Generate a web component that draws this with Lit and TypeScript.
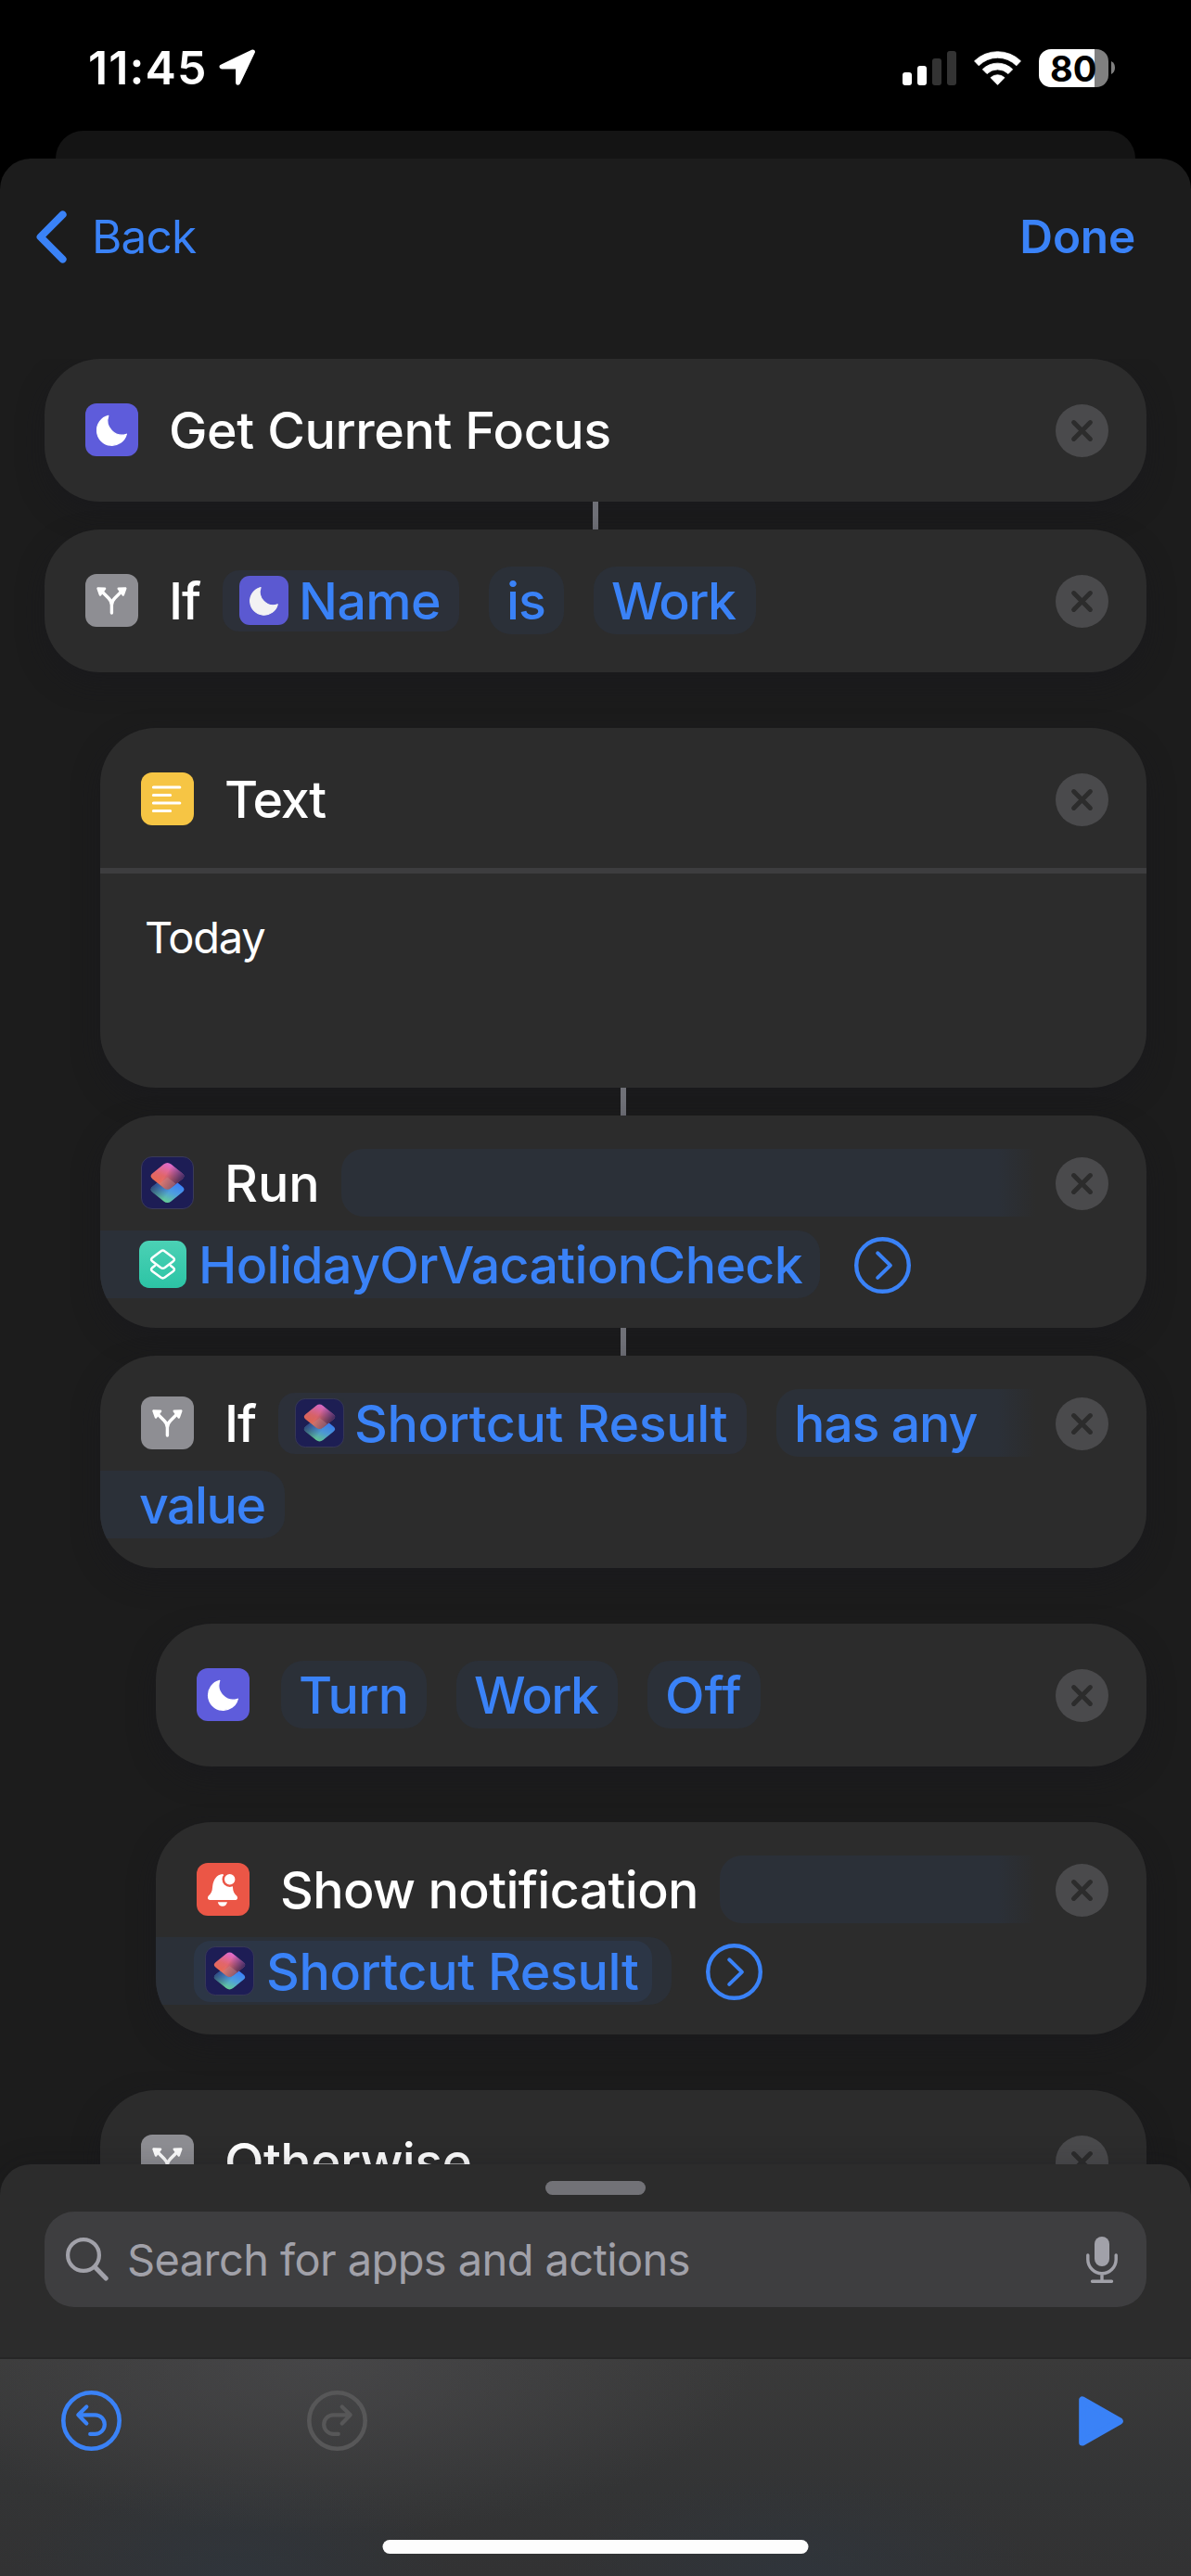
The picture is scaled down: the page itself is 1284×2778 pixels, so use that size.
import { LitElement, html, css, svg, nothing, type TemplateResult } from "lit";
import { customElement, property } from "lit/decorators.js";
import { classMap } from "lit/directives/class-map.js";
import { styleMap } from "lit/directives/style-map.js";

type IconName = "moon" | "branch" | "text" | "shortcuts" | "shortcut-green" | "bell";

interface Token {
  kind: "label" | "pill" | "variable" | "nested" | "field" | "more";
  text?: string;
  icon?: IconName;
  /** box width in px */
  w?: number;
  /** letter spacing in px */
  ls?: number;
  /** the token is the second half of one that wraps from the line above */
  wrapped?: boolean;
  /** the token continues on the next line and fades out at its end */
  fade?: boolean;
}

interface Action {
  icon: IconName;
  lines: Token[][];
  indent: number;
  body?: string;
  connected?: boolean;
}

const actions: Action[] = [
  {
    icon: "moon",
    indent: 0,
    connected: true,
    lines: [[{ kind: "label", text: "Get Current Focus", ls: -0.4 }]],
  },
  {
    icon: "branch",
    indent: 0,
    lines: [
      [
        { kind: "label", text: "If", w: 58, ls: -1 },
        { kind: "variable", text: "Name", icon: "moon", w: 255, ls: -0.6 },
        { kind: "pill", text: "is", w: 81, ls: -1 },
        { kind: "pill", text: "Work", w: 175, ls: -1.6 },
      ],
    ],
  },
  {
    icon: "text",
    indent: 1,
    connected: true,
    body: "Today",
    lines: [[{ kind: "label", text: "Text", ls: -1.3 }]],
  },
  {
    icon: "shortcuts",
    indent: 1,
    connected: true,
    lines: [
      [
        { kind: "label", text: "Run", w: 126 },
        { kind: "field", w: 750, fade: true },
      ],
      [
        { kind: "pill", text: "HolidayOrVacationCheck", icon: "shortcut-green", w: 776, ls: -0.64, wrapped: true },
        { kind: "more" },
      ],
    ],
  },
  {
    icon: "branch",
    indent: 1,
    lines: [
      [
        { kind: "label", text: "If", w: 58, ls: -1 },
        { kind: "variable", text: "Shortcut Result", icon: "shortcuts", w: 505, ls: -0.34 },
        { kind: "pill", text: "has any", w: 281, ls: -1.2, fade: true },
      ],
      [{ kind: "pill", text: "value", w: 199, ls: -1.5, wrapped: true }],
    ],
  },
  {
    icon: "moon",
    indent: 2,
    lines: [
      [
        { kind: "pill", text: "Turn", w: 157, ls: -0.66 },
        { kind: "pill", text: "Work", w: 174, ls: -1.6 },
        { kind: "pill", text: "Off", w: 122 },
      ],
    ],
  },
  {
    icon: "bell",
    indent: 2,
    lines: [
      [
        { kind: "label", text: "Show notification", w: 474, ls: -0.63 },
        { kind: "field", w: 342, fade: true },
      ],
      [
        { kind: "nested", text: "Shortcut Result", icon: "shortcuts", w: 494, ls: -0.4, wrapped: true },
        { kind: "more" },
      ],
    ],
  },
  {
    icon: "branch",
    indent: 1,
    lines: [[{ kind: "label", text: "Otherwise", ls: -0.6 }]],
  },
];

const rhombus =
  "M24.5 8.5Q28.5 5.5 32.5 8.5L44.5 18.2Q48.5 21.3 44.5 24.4L32.5 34Q28.5 37 24.5 34L12.5 24.4Q8.5 21.3 12.5 18.2Z";

const glyphs: Record<IconName, TemplateResult> = {
  moon: svg`
    <rect width="57" height="57" rx="12" fill="#5e5cdb"/>
    <path d="M24.8 13.4A16.2 16.2 0 1 0 44.4 33.2A15.5 15.5 0 0 1 24.8 13.4Z" fill="#fff" stroke="#fff" stroke-width="1.2" stroke-linejoin="round"/>`,
  branch: svg`
    <rect width="57" height="57" rx="12" fill="#8e8e93"/>
    <path d="M28.4 42V33.5Q28.4 29.5 25 26L18 19M28.4 33.5Q28.4 29.5 31.8 26L38.8 19" fill="none" stroke="#fff" stroke-width="3.4" stroke-linecap="round"/>
    <path d="M13.6 15.6L21 15.8L16 22.4ZM43.2 15.6L35.8 15.8L40.8 22.4Z" fill="#fff" stroke="#fff" stroke-width="2.6" stroke-linejoin="round"/>`,
  text: svg`
    <rect width="57" height="57" rx="12" fill="#f6c544"/>
    <path d="M13.4 16H41.8M13.4 24.5H31.6M13.4 33H41.8M13.4 41.5H31.6" stroke="#fff" stroke-width="3.1" stroke-linecap="round"/>`,
  shortcuts: svg`
    <defs>
      <linearGradient id="warm" x1="0.15" y1="0.75" x2="0.55" y2="0">
        <stop offset="0" stop-color="#f26d50"/><stop offset="0.4" stop-color="#ec6a6c"/><stop offset="1" stop-color="#ea6fd9"/>
      </linearGradient>
      <linearGradient id="warm-shade" x1="0.5" y1="0.35" x2="1" y2="0.6">
        <stop offset="0" stop-color="#1d1d55" stop-opacity="0"/><stop offset="1" stop-color="#1d1d55" stop-opacity="0.85"/>
      </linearGradient>
      <linearGradient id="cool" x1="0.8" y1="0.25" x2="0.4" y2="1">
        <stop offset="0" stop-color="#3a7ffb"/><stop offset="0.5" stop-color="#4f9fdc"/><stop offset="1" stop-color="#66d08f"/>
      </linearGradient>
      <linearGradient id="cool-shade" x1="0.55" y1="0.6" x2="0.05" y2="0.3">
        <stop offset="0" stop-color="#1d1d55" stop-opacity="0"/><stop offset="1" stop-color="#1d1d55" stop-opacity="0.7"/>
      </linearGradient>
    </defs>
    <rect x="0.5" y="0.5" width="56" height="56" rx="11.5" fill="#1d1d55" stroke="#3b3b58"/>
    <g transform="translate(0 14.4)"><path d=${rhombus} fill="url(#cool)"/><path d=${rhombus} fill="url(#cool-shade)"/></g>
    <path d=${rhombus} fill="url(#warm)" opacity="0.95"/><path d=${rhombus} fill="url(#warm-shade)"/>
    <path d="M28.5 22.6L37.5 29.6L32.5 34Q28.5 37 24.5 34L19.5 29.6Z" fill="#c98a8e" opacity="0.4"/>`,
  "shortcut-green": svg`
    <defs><linearGradient id="green" x1="0" y1="0" x2="0" y2="1"><stop offset="0" stop-color="#4bd1b5"/><stop offset="1" stop-color="#2cc4a5"/></linearGradient></defs>
    <rect width="57" height="57" rx="12" fill="url(#green)"/>
    <g fill="none" stroke="#fff" stroke-width="2.8" stroke-linejoin="round" stroke-linecap="round">
      <path d="M26 12.8Q28.5 10.8 31 12.8L41 20.4Q43.8 22.6 41 24.8L31 32.4Q28.5 34.2 26 32.4L16 24.8Q13.2 22.6 16 20.4Z"/>
      <path d="M19.2 29.8L16 32.4Q13.2 34.6 16 36.8L26 44.2Q28.5 46 31 44.2L41 36.8Q43.8 34.6 41 32.4L37.8 29.8"/>
    </g>`,
  bell: svg`
    <rect width="57" height="57" rx="12" fill="#eb5646"/>
    <path d="M28 12C21 12.6 17.6 19 17 26.5C16.8 31 15.4 33 12.8 35.6C11.2 37.6 12 40 14.4 40H41.6C44 40 44.8 37.6 43.2 35.6C40.6 33 39.2 31 39 26.5L38.4 20Z" fill="#fff"/>
    <path d="M22.8 42.2H33Q31.8 46.8 27.9 46.8Q24 46.8 22.8 42.2Z" fill="#fff"/>
    <circle cx="35.7" cy="17.7" r="8.2" fill="#eb5646"/><circle cx="35.7" cy="17.7" r="5.7" fill="#fff"/>`,
};

@customElement("action-icon")
export class ActionIcon extends LitElement {
  @property() name: IconName = "moon";
  @property({ type: Number }) size = 57;
  static styles = css`
    :host { display: block; flex: none; }
    svg { display: block; }
  `;
  render() {
    return html`<svg width=${this.size} height=${this.size} viewBox="0 0 57 57">${glyphs[this.name]}</svg>`;
  }
}

@customElement("action-card")
export class ActionCard extends LitElement {
  @property({ attribute: false }) action!: Action;

  static styles = css`
    :host { display: block; }
    .card {
      overflow: hidden;
      border-radius: 60px;
      background: #2c2c2c;
      box-shadow: 0 12px 28px rgba(24, 24, 30, 0.5);
      color: #fff;
      font-size: 55.5px;
      font-weight: 500;
      line-height: 72px;
    }
    .lines { display: flex; flex-direction: column; gap: 15px; padding: 40px 0 41px; }
    .lines.two { padding: 36px 0 32px; }
    .lines.headed { padding-bottom: 38px; border-bottom: 6px solid #3d3d3f; }
    .line { display: flex; align-items: center; height: 73px; }
    .lead { padding-left: 44px; }
    .label { margin-left: 33px; }
    .lead + .pill { margin-left: 34px; }
    .word { padding-top: 1px; white-space: nowrap; }
    .box { display: flex; align-items: center; box-sizing: border-box; flex: none; color: #3a82f7; }
    .pill, .field { height: 73px; border-radius: 24px; background: #2b3038; padding-left: 19px; }
    .box + .box { margin-left: 32px; }
    .variable { height: 66px; border-radius: 18px; background: #2c3039; padding-left: 18px; gap: 11px; }
    .variable action-icon { opacity: 0.94; }
    .fade { border-radius: 24px 0 0 24px; background: linear-gradient(90deg, #2b3038 calc(100% - 42px), #2c2c2c calc(100% - 1px)); }
    .wrapped { border-radius: 0 24px 24px 0; padding-left: 42px; gap: 13px; }
    .outer { padding: 0 21px 0 41px; }
    .inner { height: 66px; border-radius: 18px; background: #2c3646; padding-left: 12px; gap: 13px; }
    .more { display: block; flex: none; margin: 2px 0 0 37px; }
    .remove { display: block; flex: none; margin: 2px 41px 0 auto; }
    .body { height: 191px; padding: 40px 48px 0; font-size: 47px; font-weight: 400; line-height: 58px; letter-spacing: -1.3px; }
  `;

  private token(t: Token) {
    const box = t.w ? { width: `${t.w}px` } : {};
    const word = html`<span class="word" style=${styleMap({ letterSpacing: `${t.ls ?? 0}px` })}>${t.text}</span>`;
    switch (t.kind) {
      case "label":
        return html`<div class="label" style=${styleMap(box)}>${word}</div>`;
      case "field":
        return html`<div class="box field fade" style=${styleMap(box)}></div>`;
      case "variable":
        return html`<div class="box variable" style=${styleMap(box)}><action-icon .name=${t.icon!} .size=${53}></action-icon>${word}</div>`;
      case "nested":
        return html`<div class="box pill wrapped outer">
          <div class="box inner" style=${styleMap(box)}><action-icon .name=${t.icon!} .size=${53}></action-icon>${word}</div>
        </div>`;
      case "more":
        return html`<svg class="more" width="61" height="61" viewBox="0 0 61 61" fill="none" stroke="#3a82f7" stroke-linecap="round" stroke-linejoin="round">
          <circle cx="30.5" cy="30.5" r="28.3" stroke-width="4.4"/><path d="M25.2 17.3L38.9 30.6L25.2 43.9" stroke-width="4"/></svg>`;
      default:
        return html`<div class=${classMap({ box: true, pill: true, fade: !!t.fade, wrapped: !!t.wrapped })} style=${styleMap(box)}>
          ${t.icon ? html`<action-icon .name=${t.icon} .size=${51}></action-icon>` : nothing}${word}
        </div>`;
    }
  }

  render() {
    const a = this.action;
    return html`<div class="card">
      <div class=${classMap({ lines: true, two: a.lines.length === 2, headed: !!a.body })}>
        ${a.lines.map(
          (line, i) => html`<div class="line">
            ${i === 0 ? html`<action-icon class="lead" .name=${a.icon}></action-icon>` : nothing}
            ${line.map((t) => this.token(t))}
            ${i === 0
              ? html`<svg class="remove" width="57" height="57" viewBox="0 0 57 57"><circle cx="28.5" cy="28.5" r="28.5" fill="#4a4a4c"/>
                  <path d="M19.6 19.6L37.4 37.4M37.4 19.6L19.6 37.4" stroke="#2c2c2c" stroke-width="5" stroke-linecap="round"/></svg>`
              : nothing}
          </div>`,
        )}
      </div>
      ${a.body ? html`<div class="body">${a.body}</div>` : nothing}
    </div>`;
  }
}

@customElement("app-root")
export class AppRoot extends LitElement {
  static styles = css`
    :host {
      display: flex;
      flex-direction: column;
      width: 1284px;
      height: 2778px;
      overflow: hidden;
      background: #000;
      color: #fff;
      font-family: Inter, "Liberation Sans", sans-serif;
    }
    svg { display: block; flex: none; }
    .status { display: flex; align-items: center; box-sizing: border-box; height: 141px; padding: 5px 82px 0 95px; }
    .time { font-size: 50px; font-weight: 600; letter-spacing: 1.1px; width: 141px; }
    .radios { display: flex; align-items: center; margin-left: auto; gap: 19px; }
    .power { display: flex; align-items: center; gap: 3px; }
    .battery {
      box-sizing: border-box;
      width: 75px;
      height: 41px;
      padding-left: 12px;
      border-radius: 13px;
      background: linear-gradient(90deg, #fff 60px, #808080 60px);
      color: #000;
      font-size: 38px;
      font-weight: 700;
      line-height: 42px;
    }
    .backdrop { height: 30px; margin: 0 60px; border-radius: 32px 32px 0 0; background: #141414; }
    .sheet { display: flex; flex-direction: column; flex: 1; min-height: 0; border-radius: 33px 33px 0 0; background: #1c1c1c; }
    .nav { display: flex; align-items: center; justify-content: space-between; height: 168px; padding: 0 60px 48px 39px; color: #3a82f7; font-size: 49.5px; }
    .back { display: flex; align-items: center; gap: 27px; letter-spacing: -0.8px; }
    .done { font-weight: 600; letter-spacing: -0.2px; }
    .list { flex: 1; min-height: 0; overflow: hidden; }
    .item { display: flex; flex-direction: column; padding: 0 48px 60px; }
    .item.connected { padding-bottom: 0; }
    .item.indent-1 { padding-left: 108px; }
    .item.indent-2 { padding-left: 168px; }
    .connector { align-self: center; width: 6px; height: 30px; background: #6f7077; }
    .drawer {
      display: flex;
      flex-direction: column;
      align-items: center;
      gap: 18px;
      box-sizing: border-box;
      height: 210px;
      padding: 18px 48px 0;
      border-bottom: 2px solid #262626;
      border-radius: 33px 33px 0 0;
      background: #2c2c2c;
      box-shadow: 0 0 30px rgba(20, 20, 24, 0.22);
      z-index: 1;
    }
    .grabber { width: 108px; height: 15px; border-radius: 8px; background: #727277; }
    .search {
      display: flex;
      align-items: center;
      align-self: stretch;
      box-sizing: border-box;
      height: 103px;
      padding: 0 31px 0 23px;
      border-radius: 32px;
      background: #3e3e40;
      color: #a1a1a9;
      font-size: 47px;
      letter-spacing: -0.6px;
    }
    .placeholder { flex: 1; margin-left: 20px; }
    .toolbar {
      display: flex;
      flex-direction: column;
      align-items: center;
      gap: 96px;
      box-sizing: border-box;
      height: 234px;
      padding: 34px 73px 0 66px;
      background:
        radial-gradient(460px 190px at 350px 0, rgba(72, 72, 74, 0.85), rgba(72, 72, 74, 0.42) 50%, rgba(72, 72, 74, 0)),
        radial-gradient(240px 120px at 250px 100%, rgba(47, 53, 60, 0.9), rgba(47, 53, 60, 0)),
        radial-gradient(260px 110px at 860px 100%, rgba(47, 53, 60, 0.9), rgba(47, 53, 60, 0)),
        linear-gradient(#3a3a3a, #333435 60%, #323233);
      z-index: 1;
    }
    .tools { display: flex; align-items: center; align-self: stretch; gap: 200px; }
    .play { margin-left: auto; }
    .home { width: 459px; height: 15px; margin-right: -7px; border-radius: 8px; background: #fdfdfd; transform: translateX(-0.5px); }
  `;

  render() {
    return html`
      <div class="status">
        <div class="time">11:45</div>
        <svg width="40" height="40" viewBox="0 0 40 40"><path d="M36.4 2.9L3.1 18.9H20.6V36.2Z" fill="#fff" stroke="#fff" stroke-width="5" stroke-linejoin="round"/></svg>
        <div class="radios">
          <svg width="58" height="37" viewBox="0 0 58 37">
            <g fill="#fff"><rect y="23" width="10" height="14" rx="3"/><rect x="16" y="16" width="10" height="21" rx="3"/></g>
            <g fill="#333"><rect x="32" y="8" width="10" height="29" rx="3"/><rect x="48" width="10" height="37" rx="3"/></g>
          </svg>
          <svg width="51" height="37" viewBox="0 0 51 37" fill="#fff" stroke="#fff" stroke-width="0.8" stroke-linejoin="round">
            <path d="M0.5 10.8A36 36 0 0 1 50.5 10.8L45.8 15.8A28.5 28.5 0 0 0 5.2 15.8Z"/>
            <path d="M9.3 19.8A23 23 0 0 1 41.7 19.8L37 24.6A16.5 16.5 0 0 0 14 24.6Z"/>
            <path d="M18 28.7A11 11 0 0 1 33 28.7L25.5 36.4Z"/>
          </svg>
          <div class="power">
            <div class="battery">80</div>
            <svg width="4" height="14" viewBox="0 0 4 14"><path d="M0 0Q4 2 4 7T0 14Z" fill="#808080"/></svg>
          </div>
        </div>
      </div>
      <div class="backdrop"></div>
      <div class="sheet">
        <div class="nav">
          <div class="back">
            <svg width="33" height="57" viewBox="0 0 33 57"><path d="M28.6 4.4L4.6 28.5L28.6 52.6" fill="none" stroke="#3a82f7" stroke-width="8" stroke-linecap="round" stroke-linejoin="round"/></svg>
            <span>Back</span>
          </div>
          <span class="done">Done</span>
        </div>
        <div class="list">
          ${actions.map(
            (a) => html`<div class=${classMap({ item: true, connected: !!a.connected, [`indent-${a.indent}`]: true })}>
              <action-card .action=${a}></action-card>
              ${a.connected ? html`<div class="connector"></div>` : nothing}
            </div>`,
          )}
        </div>
        <div class="drawer">
          <div class="grabber"></div>
          <div class="search">
            <svg width="46" height="47" viewBox="0 0 46 47" fill="none" stroke="#a1a1a9" stroke-linecap="round">
              <circle cx="19" cy="19" r="16.9" stroke-width="4.2"/><path d="M31.5 32L43.2 44" stroke-width="5"/>
            </svg>
            <span class="placeholder">Search for apps and actions</span>
            <svg width="34" height="50" viewBox="0 0 34 50" fill="none" stroke="#a1a1a9" stroke-width="3.4" stroke-linecap="round">
              <rect x="9" width="16" height="32" rx="8" fill="#a1a1a9" stroke="none"/>
              <path d="M1.8 20V24.5A15.2 15.2 0 0 0 32.2 24.5V20M17 40V48M6.5 48.3H27.5"/>
            </svg>
          </div>
        </div>
        <div class="toolbar">
          <div class="tools">
            <svg width="65" height="65" viewBox="0 0 65 65" fill="none" stroke="#3a82f7" stroke-width="4.2" stroke-linecap="round" stroke-linejoin="round">
              <circle cx="32.5" cy="32.5" r="30.2" stroke-width="4.6"/><path d="M27.3 17.4L18.3 26.3L27.3 35.4M18.5 26.3H36.5A10.3 10.3 0 0 1 36.5 46.9H31.2"/>
            </svg>
            <svg width="65" height="65" viewBox="0 0 65 65" fill="none" stroke="#575758" stroke-width="4.2" stroke-linecap="round" stroke-linejoin="round">
              <circle cx="32.5" cy="32.5" r="30.2" stroke-width="4.6"/><path d="M37.7 17.4L46.7 26.3L37.7 35.4M46.5 26.3H28.5A10.3 10.3 0 0 0 28.5 46.9H33.8"/>
            </svg>
            <svg class="play" width="48" height="54" viewBox="0 0 48 54"><path d="M3.8 4V50L44.2 27Z" fill="#3a82f7" stroke="#3a82f7" stroke-width="7.2" stroke-linejoin="round"/></svg>
          </div>
          <div class="home"></div>
        </div>
      </div>
    `;
  }
}
